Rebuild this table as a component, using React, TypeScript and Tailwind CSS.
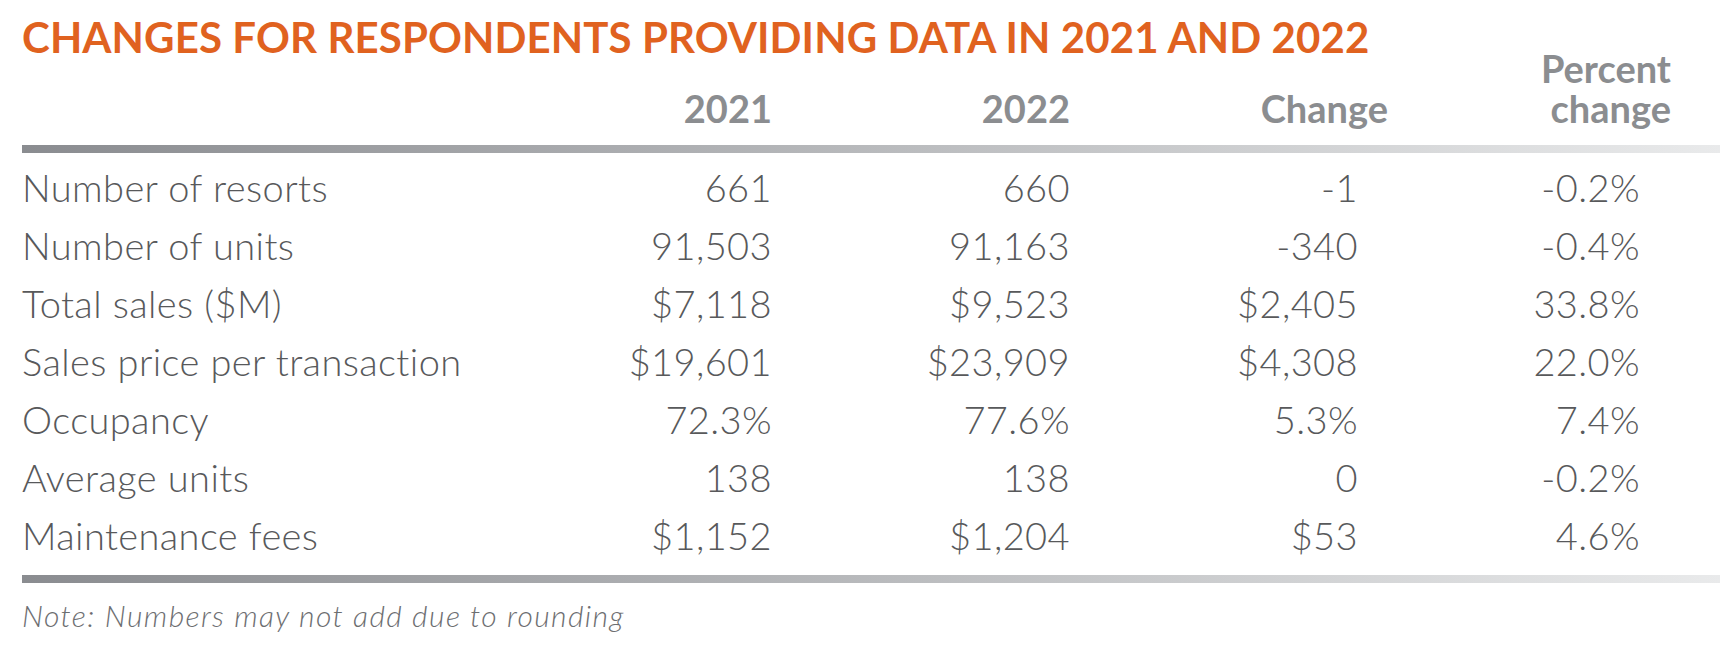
const rows = [
  { label: "Number of resorts", y2021: "661", y2022: "660", change: "-1", pct: "-0.2%" },
  { label: "Number of units", y2021: "91,503", y2022: "91,163", change: "-340", pct: "-0.4%" },
  { label: "Total sales ($M)", y2021: "$7,118", y2022: "$9,523", change: "$2,405", pct: "33.8%" },
  { label: "Sales price per transaction", y2021: "$19,601", y2022: "$23,909", change: "$4,308", pct: "22.0%" },
  { label: "Occupancy", y2021: "72.3%", y2022: "77.6%", change: "5.3%", pct: "7.4%" },
  { label: "Average units", y2021: "138", y2022: "138", change: "0", pct: "-0.2%" },
  { label: "Maintenance fees", y2021: "$1,152", y2022: "$1,204", change: "$53", pct: "4.6%" },
]

const cols = "grid grid-cols-[478px_272px_298px_288px_282px]"

function Rule() {
  return <div className="h-[8px] bg-linear-to-r from-[#8a8c90] to-[#e9eaeb]" />
}

export default function App() {
  return (
    <div className="w-[1720px] h-[654px] bg-white pl-[22px] pt-[16px] font-['Lato',sans-serif]">
      <h1 className="text-[42px] leading-[42px] font-bold text-[#e0621f] tracking-[0.1px]">
        CHANGES FOR RESPONDENTS PROVIDING DATA IN 2021 AND 2022
      </h1>

      <div className={`${cols} items-end pb-[17px] text-[38px] leading-[40px] font-bold text-[#8b8d90] -mt-[10px]`}>
        <div />
        <div className="text-right">2021</div>
        <div className="text-right">2022</div>
        <div className="text-right -mr-[30px]">Change</div>
        <div className="text-right -mr-[31px] flex flex-col items-end">
          <span>Percent</span>
          <span>change</span>
        </div>
      </div>

      <Rule />

      <div className="pt-[5px] pb-[11px] text-[38px] leading-[58px] font-light tracking-[0.4px] text-[#58595b]">
        {rows.map((r) => (
          <div key={r.label} className={cols}>
            <div>{r.label}</div>
            <div className="text-right">{r.y2021}</div>
            <div className="text-right">{r.y2022}</div>
            <div className="text-right">{r.change}</div>
            <div className="text-right">{r.pct}</div>
          </div>
        ))}
      </div>

      <Rule />

      <p className="mt-[15px] text-[30px] leading-[34px] italic font-light tracking-[1.4px] text-[#6d6e71]">
        Note: Numbers may not add due to rounding
      </p>
    </div>
  )
}
